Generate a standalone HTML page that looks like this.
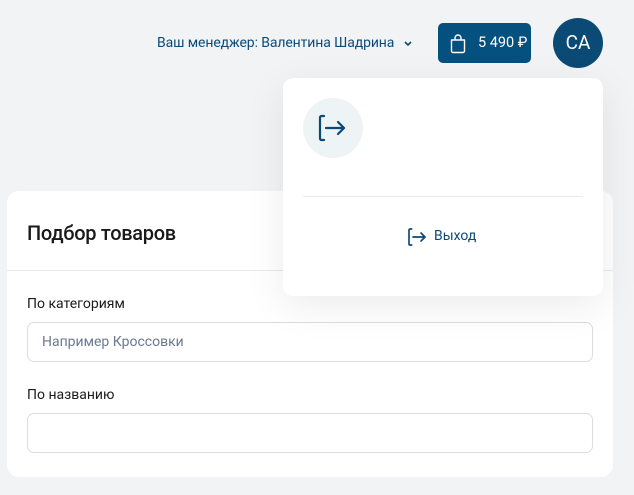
<!DOCTYPE html>
<html><head><meta charset="utf-8"><style>
*{box-sizing:border-box;margin:0;padding:0}
body{width:634px;height:495px;background:#f2f3f5;font-family:"Roboto","Liberation Sans",sans-serif;position:relative;overflow:hidden}
.mgr{position:absolute;left:157px;top:35px;font-size:14px;color:#0b4a78;letter-spacing:-0.1px}
.mgr svg{position:absolute;left:246px;top:5px}
.cart{position:absolute;left:438px;top:23px;width:93px;height:40px;background:#04507f;border-radius:5px;color:#fff;font-size:14.5px}
.cart span{position:absolute;left:40px;top:11px}
.cart svg{position:absolute;left:11px;top:11px}
.av{position:absolute;left:553px;top:18px;width:50px;height:50px;border-radius:50%;background:#0a4a74;color:#fff;font-size:19px;text-align:center;line-height:50px}
.card{position:absolute;left:7px;top:191px;width:606px;height:286px;background:#fff;border-radius:12px}
.card h1{position:absolute;left:20px;top:30px;font-size:20px;font-weight:500;color:#1a1a1a;letter-spacing:-0.3px}
.card .hr{position:absolute;left:0;right:0;top:79px;height:1px;background:#e8e9ec}
.lbl{position:absolute;left:20px;font-size:14px;color:#1a1a1a}
.inp{position:absolute;left:20px;width:566px;height:40px;border:1px solid #dcdde0;border-radius:7px;font-size:14px;color:#6b7890;padding:11px 14px}
.dd{position:absolute;left:283px;top:78px;width:320px;height:218px;background:#fff;border-radius:10px;box-shadow:0 10px 40px rgba(0,0,0,0.08)}
.ic{position:absolute;left:20px;top:20px;width:60px;height:60px;border-radius:50%;background:#eef3f6}
.ic svg{position:absolute;left:14px;top:16px}
.dd .hr{position:absolute;left:20px;right:20px;top:118px;height:1px;background:#e8e9ee}
.exit{position:absolute;left:124px;top:149px;font-size:14px;color:#0b4a78}
.exit svg{position:absolute;left:0;top:0}
.exit span{position:absolute;left:27px;top:1px;white-space:nowrap}
</style></head><body>
<div class="mgr">Ваш менеджер: Валентина Шадрина<svg width="10" height="8" viewBox="0 0 10 8"><path d="M2 2l3 3 3-3" stroke="#0b4a78" stroke-width="1.6" fill="none"/></svg></div>
<div class="cart"><svg width="18" height="20" viewBox="0 0 18 20"><path d="M2.5 6h13v11a1.5 1.5 0 0 1-1.5 1.5H4A1.5 1.5 0 0 1 2.5 17z M6 6V4a3 3 0 0 1 6 0V6" stroke="#fff" stroke-width="1.4" fill="none" stroke-linejoin="round"/></svg><span>5 490 ₽</span></div>
<div class="av">СА</div>
<div class="card">
<h1>Подбор товаров</h1>
<div class="hr"></div>
<div class="lbl" style="top:105px">По категориям</div>
<div class="inp" style="top:131px">Например Кроссовки</div>
<div class="lbl" style="top:196px">По названию</div>
<div class="inp" style="top:222px"></div>
</div>
<div class="dd">
<div class="ic"><svg width="30" height="28" viewBox="0 0 30 28"><path d="M7 2H4.5a1.5 1.5 0 0 0-1.5 1.5v21A1.5 1.5 0 0 0 4.5 26H7" stroke="#0b4a78" stroke-width="2.2" fill="none" stroke-linecap="round"/><path d="M9 14h18M21 8l6 6-6 6" stroke="#0b4a78" stroke-width="2.2" fill="none" stroke-linecap="round" stroke-linejoin="round"/></svg></div>
<div class="hr"></div>
<div class="exit"><svg width="20" height="20" viewBox="0 0 30 30"><path d="M7 3H4.5a1.5 1.5 0 0 0-1.5 1.5v21A1.5 1.5 0 0 0 4.5 27H7" stroke="#0b4a78" stroke-width="2.5" fill="none" stroke-linecap="round"/><path d="M9 15h18M21 9l6 6-6 6" stroke="#0b4a78" stroke-width="2.5" fill="none" stroke-linecap="round" stroke-linejoin="round"/></svg><span>Выход</span></div>
</div>
</body></html>
